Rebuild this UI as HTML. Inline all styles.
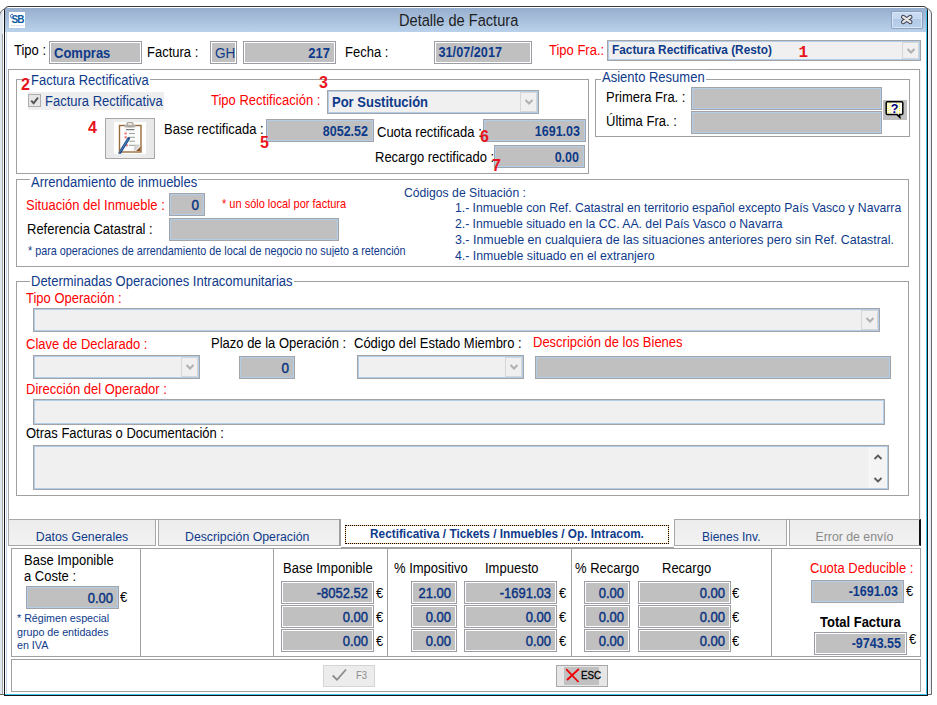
<!DOCTYPE html>
<html><head><meta charset="utf-8">
<style>
*{margin:0;padding:0;box-sizing:border-box}
html,body{width:937px;height:705px;overflow:hidden;background:#fff;font-family:"Liberation Sans",sans-serif;position:relative}
.a{position:absolute}
.t{position:absolute;white-space:nowrap;line-height:1;font-size:13px;color:#000;transform:scaleY(1.1);transform-origin:0 11px}
.r{color:#f00}
.b{color:#0e3a8a}
.num{position:absolute;font-weight:bold;color:#e8141c;font-size:16px;line-height:1}
.gb{position:absolute;border:1px solid #a0a0a0}
.gt{position:absolute;background:#fff;color:#0e3a8a;font-size:13px;line-height:1;white-space:nowrap;padding:0 1px;transform:scaleY(1.1);transform-origin:0 11px}
.f3{position:absolute;border:1px solid #9c9ca4;background:#c0c0c0;box-shadow:inset 0 0 0 1px #fff}
.fb{position:absolute;border:1px solid #a3a3a8;background:#c0c0c0;box-shadow:inset 0 0 0 1px #b0cdea}
.cb{position:absolute;border:1px solid #a3a3a8;background:#f0f0f0;box-shadow:inset 0 0 0 1px #b0cdea}
.dd{position:absolute;top:1px;bottom:1px;right:1px;width:17px;border:1px solid #d6d6d6;background:#f0f0f0}
.dd svg{position:absolute;left:2.5px;top:50%;margin-top:-4px}
.v{position:absolute;font-weight:bold;color:#0e3a8a;font-size:13px;line-height:1;white-space:nowrap;text-align:right;transform:scaleY(1.1);transform-origin:0 11px}
.vr{position:absolute;color:#0a3480;font-size:13px;-webkit-text-stroke:0.4px #0a3480;line-height:1;white-space:nowrap;text-align:right;transform:scaleY(1.1);transform-origin:0 11px}
.eu{position:absolute;font-size:13px;line-height:1;color:#000;transform:scaleY(1.1);transform-origin:0 11px}
.tab{position:absolute;border:1px solid #a8a8a8;background:linear-gradient(#ececec,#f2f2f2);text-align:center}
.tab span{position:absolute;left:0;right:0;top:11px;font-size:12.3px;line-height:1;color:#0e3a8a;white-space:nowrap;transform:scaleY(1.1);transform-origin:0 11px}
</style></head><body>
<div class="a" style="left:-1px;top:8px;width:933px;height:687px;border:1px solid #6a6a6a;border-radius:8px 6px 0 0;background:linear-gradient(90deg,#dfe6ee,#e8eef5)"></div>
<div class="a" style="left:2px;top:34px;width:1px;height:660px;background:#a4a4a4"></div>
<div class="a" style="left:3px;top:10px;width:1px;height:684px;background:#fafbfd"></div>
<div class="a" style="left:928px;top:10px;width:1px;height:684px;background:#fafcff"></div>
<div class="a" style="left:4px;top:6px;width:924px;height:690px;border:1px solid #151515;border-top-color:#3a3a3a;border-radius:5px 5px 0 0;background:#fff;overflow:hidden"><div class="a" style="left:0;top:1px;width:922px;height:24px;background:linear-gradient(#97afce,#b9d1ea)"></div><div class="a" style="left:1px;top:25px;width:1px;height:665px;background:#c4d8f0"></div><div class="a" style="right:0;top:3px;width:1px;height:690px;background:#3cc4ee"></div><div class="a" style="left:0;bottom:0;width:922px;height:1px;background:#3cc4ee"></div></div>
<div class="a" style="left:9px;top:12px;width:16px;height:16px;background:#fff"><svg width="16" height="16" viewBox="0 0 16 16" style="position:absolute;left:0;top:0"><text x="2.6" y="11.2" font-family="Liberation Sans" font-weight="bold" font-size="10" fill="#0f5aa0" letter-spacing="-1">SB</text><path d="M3.6 6.5 Q1 6 1.6 3.2 Q2.6 1.5 4.2 2.6" fill="none" stroke="#2a6cc0" stroke-width="1"/><path d="M2 13.6 H15" stroke="#9cc0e4" stroke-width="0.7" stroke-dasharray="1 0.6"/></svg></div>
<div class="t" style="left:399px;top:14px;font-size:14.6px;color:#1e1e1e">Detalle de Factura</div>
<div class="a" style="left:891px;top:11px;width:32px;height:18px;border:1px solid #8aa2c0;border-radius:2px;box-shadow:inset 0 0 0 1px #dce8f6;background:linear-gradient(#cadcf2 0,#c4d8f0 44%,#b2cae6 44%,#b8d0ea 100%)"><svg width="32" height="18" viewBox="0 0 32 18" style="position:absolute;left:-1px;top:-1px"><path d="M12.2 6 L19.3 11 M19.3 6 L12.2 11" stroke="#3c3c4c" stroke-width="4.4" stroke-linecap="round"/><path d="M12.2 6 L19.3 11 M19.3 6 L12.2 11" stroke="#e4e4e4" stroke-width="2.4" stroke-linecap="round"/></svg></div>
<div class="t" style="left:14px;top:44px">Tipo :</div>
<div class="f3" style="left:49px;top:41px;width:93px;height:23px"></div>
<div class="v" style="left:54px;top:47px">Compras</div>
<div class="t" style="left:147px;top:46px">Factura :</div>
<div class="f3" style="left:210px;top:41px;width:27px;height:23px"></div>
<div class="t b" style="left:215px;top:47px;font-size:13.6px">GH</div>
<div class="f3" style="left:243px;top:41px;width:93px;height:23px"></div>
<div class="v" style="left:243px;top:47px;width:87px">217</div>
<div class="t" style="left:345px;top:46px">Fecha :</div>
<div class="f3" style="left:434px;top:41px;width:98px;height:23px"></div>
<div class="v" style="left:438.5px;top:47px;font-size:12.7px">31/07/2017</div>
<div class="t r" style="left:549px;top:44px">Tipo Fra.:</div>
<div class="cb" style="left:607px;top:40px;width:314px;height:21px"><div class="dd"><svg width="10" height="8" viewBox="0 0 10 8"><path d="M1.5 2 L5 5.5 L8.5 2" stroke="#b0b0b0" stroke-width="2" fill="none"/></svg></div></div>
<div class="v" style="left:612px;top:45px;font-size:11.85px">Factura Rectificativa (Resto)</div>
<div class="num" style="left:798.5px;top:45px;font-family:Liberation Mono;font-size:16px">1</div>
<div class="gb" style="left:8px;top:69px;width:912px;height:451px"></div>
<div class="a" style="left:920px;top:70px;width:1px;height:449px;background:#efefef"></div>
<div class="gb" style="left:16px;top:79px;width:573px;height:95px"></div>
<div class="gt" style="left:30px;top:74px">Factura Rectificativa</div>
<div class="num" style="left:21px;top:77px">2</div>
<div class="a" style="left:28px;top:92px;width:136px;height:18px;background:#eeeeee"></div>
<div class="a" style="left:28px;top:94px;width:13px;height:13px;border:1px solid #adadad;background:#e6e6e6"><svg width="11" height="11" viewBox="0 0 11 11" style="position:absolute;left:0;top:0"><path d="M2.2 5.6 L4.6 8.2 L9 2.6" stroke="#555" stroke-width="1.9" fill="none"/></svg></div>
<div class="t b" style="left:45px;top:95px">Factura Rectificativa</div>
<div class="t r" style="left:211px;top:94px">Tipo Rectificación :</div>
<div class="num" style="left:319px;top:75px">3</div>
<div class="cb" style="left:327px;top:90px;width:212px;height:24px"><div class="dd"><svg width="10" height="8" viewBox="0 0 10 8"><path d="M1.5 2 L5 5.5 L8.5 2" stroke="#b0b0b0" stroke-width="2" fill="none"/></svg></div></div>
<div class="v" style="left:332px;top:96px">Por Sustitución</div>
<div class="a" style="left:105px;top:118px;width:50px;height:41px;border:1px solid #a8a8a8;background:linear-gradient(90deg,#e8e8e8,#f0f0f0 50%,#e8e8e8)"></div>
<svg width="32" height="32" viewBox="0 0 32 32" style="position:absolute;left:114px;top:122px;background:#fff">
<rect x="5.5" y="3.5" width="21.5" height="26.5" fill="#fff" stroke="#9a6b3c" stroke-width="1.4"/>
<rect x="7" y="5" width="18.5" height="23.5" fill="#f2f2f2"/>
<path d="M7 5 H25.5 V23 L20.5 28.5 H7 Z" fill="#fbfbfb"/>
<path d="M20.5 28.5 L25.5 23 H21 Z" fill="#d8d8d8" stroke="#b0b0b0" stroke-width="0.5"/>
<path d="M24 27 L26.5 24.5 V29 H22 Z" fill="#8a5a2a"/>
<rect x="10.5" y="3" width="11" height="2.5" rx="0.8" fill="#b8b4ae"/>
<rect x="13" y="0.5" width="6" height="4" rx="1.5" fill="none" stroke="#a8a4a0" stroke-width="1.3"/>
<path d="M12 7.6 H20.5" stroke="#7a7a7a" stroke-width="1.2"/>
<rect x="10.5" y="10.5" width="2.2" height="2" fill="#f07070"/>
<rect x="10.5" y="14.3" width="2.2" height="2" fill="#f07070"/>
<rect x="11.5" y="22.3" width="2.2" height="2" fill="#f07070"/>
<path d="M15 11.5 H21 M15 15.3 H21 M15 19.2 H21 M15 23.3 H21" stroke="#8a9a8a" stroke-width="0.9"/>
<path d="M6 30.5 L14.6 16.5" stroke="#1f4f8a" stroke-width="2.8" stroke-linecap="round"/>
<path d="M6.5 29.5 L14.2 17" stroke="#4f86c0" stroke-width="1"/>
<path d="M4.5 31.5 L6 29" stroke="#7a7a7a" stroke-width="1.2"/>
</svg>
<div class="num" style="left:88px;top:120px">4</div>
<div class="t" style="left:164px;top:123px">Base rectificada :</div>
<div class="fb" style="left:266px;top:119px;width:108px;height:23px"></div>
<div class="v" style="left:266px;top:126px;width:102px;font-size:12.5px">8052.52</div>
<div class="num" style="left:260px;top:135px">5</div>
<div class="t" style="left:377px;top:126px">Cuota rectificada :</div>
<div class="fb" style="left:483px;top:119px;width:103px;height:23px"></div>
<div class="v" style="left:483px;top:126px;width:97px;font-size:12.5px">1691.03</div>
<div class="num" style="left:480px;top:129px">6</div>
<div class="t" style="left:375px;top:151px">Recargo rectificado :</div>
<div class="fb" style="left:494px;top:145px;width:91px;height:23px"></div>
<div class="v" style="left:494px;top:152px;width:85px;font-size:12.5px">0.00</div>
<div class="num" style="left:492px;top:158px">7</div>
<div class="gb" style="left:595px;top:79px;width:315px;height:58px"></div>
<div class="gt" style="left:601px;top:71px">Asiento Resumen</div>
<div class="t" style="left:606px;top:91px">Primera Fra. :</div>
<div class="fb" style="left:691px;top:87px;width:191px;height:23px"></div>
<div class="t" style="left:606px;top:115px">Última Fra. :</div>
<div class="fb" style="left:691px;top:111px;width:191px;height:23px"></div>
<div class="a" style="left:883px;top:100px;width:24px;height:20px;background:#c0c0c0">
<svg width="24" height="20" viewBox="0 0 24 20" style="position:absolute;left:0;top:0">
<path d="M4.5 1.7 H18.5 Q19.8 1.7 19.8 3 V13.2 Q19.8 14.6 18.5 14.6 H16.5 L16.8 17.2 L14 14.6 H4.5 Q3.2 14.6 3.2 13.2 V3 Q3.2 1.7 4.5 1.7 Z" fill="#fff" stroke="#000" stroke-width="1.5"/>
<path d="M5 3.5 V13.5 M7.2 3 V13.5 M13.8 3 V13.5 M16.5 3.5 V13.5" stroke="#f4ec00" stroke-width="1.1" stroke-dasharray="1 1.2"/>
<text x="11.5" y="12.6" text-anchor="middle" font-family="Liberation Sans" font-weight="bold" font-size="12.5" fill="#000080">?</text>
</svg></div>
<div class="gb" style="left:16px;top:179px;width:893px;height:88px"></div>
<div class="gt" style="left:30px;top:176px">Arrendamiento de inmuebles</div>
<div class="t r" style="left:26px;top:199px">Situación del Inmueble :</div>
<div class="fb" style="left:169px;top:193px;width:36px;height:23px"></div>
<div class="vr" style="left:169px;top:199px;width:30px;font-size:13.5px">0</div>
<div class="t r" style="left:222px;top:199px;font-size:11px">* un sólo local por factura</div>
<div class="t" style="left:27px;top:223px">Referencia Catastral :</div>
<div class="fb" style="left:169px;top:218px;width:170px;height:23px"></div>
<div class="t b" style="left:28px;top:246px;font-size:10.8px">* para operaciones de arrendamiento de local de negocio no sujeto a retención</div>
<div class="t b" style="left:404px;top:187px;font-size:12.2px">Códigos de Situación :</div>
<div class="t b" style="left:455px;top:202px;font-size:12.2px">1.- Inmueble con Ref. Catastral en territorio español excepto País Vasco y Navarra</div>
<div class="t b" style="left:455px;top:218px;font-size:12.2px">2.- Inmueble situado en la CC. AA. del País Vasco o Navarra</div>
<div class="t b" style="left:455px;top:234px;font-size:12.44px">3.- Inmueble en cualquiera de las situaciones anteriores pero sin Ref. Catastral.</div>
<div class="t b" style="left:455px;top:250px;font-size:12.3px">4.- Inmueble situado en el extranjero</div>
<div class="gb" style="left:16px;top:281px;width:893px;height:215px"></div>
<div class="gt" style="left:30px;top:275px">Determinadas Operaciones Intracomunitarias</div>
<div class="t r" style="left:26px;top:292px">Tipo Operación :</div>
<div class="cb" style="left:33px;top:308px;width:847px;height:24px"><div class="dd"><svg width="10" height="8" viewBox="0 0 10 8"><path d="M1.5 2 L5 5.5 L8.5 2" stroke="#b0b0b0" stroke-width="2" fill="none"/></svg></div></div>
<div class="t r" style="left:26px;top:338px">Clave de Declarado :</div>
<div class="t" style="left:211px;top:337px">Plazo de la Operación :</div>
<div class="t" style="left:354px;top:337px">Código del Estado Miembro :</div>
<div class="t r" style="left:533px;top:336px">Descripción de los Bienes</div>
<div class="cb" style="left:33px;top:355px;width:167px;height:24px"><div class="dd"><svg width="10" height="8" viewBox="0 0 10 8"><path d="M1.5 2 L5 5.5 L8.5 2" stroke="#b0b0b0" stroke-width="2" fill="none"/></svg></div></div>
<div class="fb" style="left:239px;top:356px;width:56px;height:23px"></div>
<div class="vr" style="left:239px;top:362px;width:50px;font-size:13.5px">0</div>
<div class="cb" style="left:357px;top:355px;width:167px;height:24px"><div class="dd"><svg width="10" height="8" viewBox="0 0 10 8"><path d="M1.5 2 L5 5.5 L8.5 2" stroke="#b0b0b0" stroke-width="2" fill="none"/></svg></div></div>
<div class="fb" style="left:535px;top:356px;width:356px;height:23px"></div>
<div class="t r" style="left:26px;top:383px">Dirección del Operador :</div>
<div class="cb" style="left:33px;top:399px;width:852px;height:26px"></div>
<div class="t" style="left:26px;top:427px">Otras Facturas o Documentación :</div>
<div class="cb" style="left:33px;top:445px;width:856px;height:45px">
<div class="a" style="right:1px;top:1px;width:18px;height:41px;background:#f4f4f4;border-left:1px solid #fafafa"></div>
<svg width="10" height="40" viewBox="0 0 10 40" style="position:absolute;right:5px;top:2px">
<path d="M1.5 11 L5 7.5 L8.5 11" stroke="#5a5a5a" stroke-width="1.8" fill="none"/>
<path d="M1.5 30 L5 33.5 L8.5 30" stroke="#5a5a5a" stroke-width="1.8" fill="none"/>
</svg></div>
<div class="tab" style="left:8px;top:519px;width:148px;height:27px"><span>Datos Generales</span></div>
<div class="tab" style="left:158px;top:519px;width:183px;height:27px;border-right:2px solid #a0a0a0"><span style="left:26px;right:auto">Descripción Operación</span></div>
<div class="a" style="left:341px;top:519px;width:333px;height:2px;background:#fff"></div>
<div class="a" style="left:345px;top:525px;width:324px;height:19px;border:1px solid #ffc488"></div>
<div class="a" style="left:345px;top:525px;width:324px;height:19px;border:1px dotted #000"></div>
<div class="a" style="left:341px;top:547px;width:333px;height:1px;background:#a0a0a0"></div>
<div class="t" style="left:345px;top:529px;width:324px;text-align:center;font-weight:bold;color:#0e3a8a;font-size:11.8px">Rectificativa / Tickets / Inmuebles / Op. Intracom.</div>
<div class="tab" style="left:674px;top:519px;width:113px;height:27px"><span style="left:27px;right:auto;font-size:12px">Bienes Inv.</span></div>
<div class="tab" style="left:789px;top:519px;width:132px;height:27px;border-right:2px solid #111"><span style="color:#8a8a8a">Error de envío</span></div>
<div class="gb" style="left:11px;top:548px;width:910px;height:109px"></div>
<div class="a" style="left:140px;top:548px;width:1px;height:109px;background:#a0a0a0"></div>
<div class="a" style="left:273px;top:548px;width:1px;height:109px;background:#a0a0a0"></div>
<div class="a" style="left:387px;top:548px;width:1px;height:109px;background:#a0a0a0"></div>
<div class="a" style="left:571px;top:548px;width:1px;height:109px;background:#a0a0a0"></div>
<div class="a" style="left:771px;top:548px;width:1px;height:109px;background:#a0a0a0"></div>
<div class="t" style="left:24px;top:554px">Base Imponible</div>
<div class="t" style="left:24px;top:570px">a Coste :</div>
<div class="fb" style="left:26px;top:586px;width:93px;height:23px"></div>
<div class="vr" style="left:26px;top:592px;width:87px">0.00</div>
<div class="eu" style="left:120px;top:591px">€</div>
<div class="t b" style="left:17px;top:613px;font-size:10.7px">* Régimen especial</div>
<div class="t b" style="left:17px;top:627px;font-size:10.7px">grupo de entidades</div>
<div class="t b" style="left:17px;top:640px;font-size:10.7px">en IVA</div>
<div class="t" style="left:283px;top:562px">Base Imponible</div>
<div class="t" style="left:394px;top:562px">% Impositivo</div>
<div class="t" style="left:485px;top:562px">Impuesto</div>
<div class="t" style="left:575px;top:562px">% Recargo</div>
<div class="t" style="left:662px;top:562px">Recargo</div>
<div class="t r" style="left:810px;top:562px">Cuota Deducible :</div>
<div class="f3" style="left:281px;top:581px;width:93px;height:23px"></div>
<div class="vr" style="left:281px;top:587px;width:87px">-8052.52</div>
<div class="eu" style="left:376px;top:587px">€</div>
<div class="f3" style="left:411px;top:581px;width:46px;height:23px"></div>
<div class="vr" style="left:411px;top:587px;width:40px">21.00</div>
<div class="f3" style="left:464px;top:581px;width:93px;height:23px"></div>
<div class="vr" style="left:464px;top:587px;width:87px">-1691.03</div>
<div class="eu" style="left:559px;top:587px">€</div>
<div class="f3" style="left:584px;top:581px;width:46px;height:23px"></div>
<div class="vr" style="left:584px;top:587px;width:40px">0.00</div>
<div class="f3" style="left:638px;top:581px;width:93px;height:23px"></div>
<div class="vr" style="left:638px;top:587px;width:87px">0.00</div>
<div class="eu" style="left:732px;top:587px">€</div>
<div class="f3" style="left:281px;top:605px;width:93px;height:23px"></div>
<div class="vr" style="left:281px;top:611px;width:87px">0.00</div>
<div class="eu" style="left:376px;top:611px">€</div>
<div class="f3" style="left:411px;top:605px;width:46px;height:23px"></div>
<div class="vr" style="left:411px;top:611px;width:40px">0.00</div>
<div class="f3" style="left:464px;top:605px;width:93px;height:23px"></div>
<div class="vr" style="left:464px;top:611px;width:87px">0.00</div>
<div class="eu" style="left:559px;top:611px">€</div>
<div class="f3" style="left:584px;top:605px;width:46px;height:23px"></div>
<div class="vr" style="left:584px;top:611px;width:40px">0.00</div>
<div class="f3" style="left:638px;top:605px;width:93px;height:23px"></div>
<div class="vr" style="left:638px;top:611px;width:87px">0.00</div>
<div class="eu" style="left:732px;top:611px">€</div>
<div class="f3" style="left:281px;top:629px;width:93px;height:23px"></div>
<div class="vr" style="left:281px;top:635px;width:87px">0.00</div>
<div class="eu" style="left:376px;top:635px">€</div>
<div class="f3" style="left:411px;top:629px;width:46px;height:23px"></div>
<div class="vr" style="left:411px;top:635px;width:40px">0.00</div>
<div class="f3" style="left:464px;top:629px;width:93px;height:23px"></div>
<div class="vr" style="left:464px;top:635px;width:87px">0.00</div>
<div class="eu" style="left:559px;top:635px">€</div>
<div class="f3" style="left:584px;top:629px;width:46px;height:23px"></div>
<div class="vr" style="left:584px;top:635px;width:40px">0.00</div>
<div class="f3" style="left:638px;top:629px;width:93px;height:23px"></div>
<div class="vr" style="left:638px;top:635px;width:87px">0.00</div>
<div class="eu" style="left:732px;top:635px">€</div>
<div class="fb" style="left:811px;top:580px;width:93px;height:23px"></div>
<div class="v" style="left:811px;top:586px;width:87px;font-size:12.5px">-1691.03</div>
<div class="eu" style="left:906px;top:585px">€</div>
<div class="t" style="left:820px;top:616px;font-weight:bold">Total Factura</div>
<div class="f3" style="left:814px;top:632px;width:93px;height:23px"></div>
<div class="v" style="left:814px;top:638px;width:87px;font-size:12.5px">-9743.55</div>
<div class="eu" style="left:909px;top:633px">€</div>
<div class="gb" style="left:11px;top:659px;width:910px;height:33px"></div>
<div class="a" style="left:323px;top:665px;width:52px;height:22px;border:1px solid #d4d4d4;background:#ececec">
<svg width="50" height="20" viewBox="0 0 50 20" style="position:absolute;left:0;top:0">
<path d="M8.7 9.5 L13 13.8 L22 3.5" stroke="#8a8a8a" stroke-width="1.8" fill="none"/>
</svg></div>
<div class="t" style="left:356px;top:671px;font-size:9.5px;color:#8c8c8c">F3</div>
<div class="a" style="left:556px;top:665px;width:52px;height:22px;border:1px solid #a8a8a8;background:#e6e6e6">
<div class="a" style="left:7px;top:1px;width:35px;height:18px;background:#c0c0c0"></div>
<svg width="50" height="20" viewBox="0 0 50 20" style="position:absolute;left:0;top:0">
<path d="M9.2 3.2 L21.5 16 M21.8 3 L10 14" stroke="#f00000" stroke-width="1.8" fill="none"/>
</svg></div>
<div class="t" style="left:581px;top:671px;font-size:9.8px;-webkit-text-stroke:0.25px #000">ESC</div>
</body></html>
